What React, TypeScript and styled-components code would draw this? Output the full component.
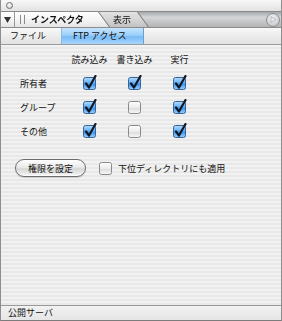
import React from "react";
import styled, { createGlobalStyle } from "styled-components";

const Global = createGlobalStyle`
  html, body {
    margin: 0;
    padding: 0;
    background: #ffffff;
  }
  body {
    font-family: "Noto Sans CJK JP", "Noto Sans", sans-serif;
    font-size: 9px;
    color: #111;
  }
`;

const Window = styled.div`
  width: 282px;
  height: 321px;
  box-sizing: border-box;
  display: flex;
  flex-direction: column;
  border-left: 1px solid #8e8e8e;
  border-right: 1px solid #8e8e8e;
  border-bottom: 1px solid #7c7c7c;
  overflow: hidden;
`;

const TitleBar = styled.div`
  height: 11px;
  flex: none;
  display: flex;
  align-items: center;
  padding-left: 5px;
  background: linear-gradient(#f8f8f8, #e2e2e2);
  border-bottom: 1px solid #8a8a8a;
`;

const CloseDot = styled.span`
  width: 5px;
  height: 5px;
  border-radius: 50%;
  border: 1px solid #6e6e6e;
  background: radial-gradient(circle at 40% 35%, #ffffff, #c8c8c8);
`;

const TabStrip = styled.div`
  height: 15px;
  flex: none;
  display: flex;
  align-items: stretch;
  background: linear-gradient(
    #a4a8ac 0%,
    #d4d6d8 35%,
    #c6c8ca 60%,
    #b2b4b6 100%
  );
  border-bottom: 1px solid #8c8c8c;
`;

const TabEdge = styled.div<{ $front?: boolean }>`
  display: flex;
  position: relative;
  z-index: ${(p) => (p.$front ? 2 : 1)};
  filter: drop-shadow(1px 0 0 #6f6f6f);
  margin-left: ${(p) => (p.$front ? 0 : -11)}px;
`;

const TabShape = styled.div<{ $w: number; $front?: boolean }>`
  width: ${(p) => p.$w}px;
  display: flex;
  align-items: center;
  clip-path: ${(p) =>
    p.$front
      ? `polygon(0 0, ${p.$w - 11}px 0, ${p.$w}px 100%, 0 100%)`
      : `polygon(0 0, ${p.$w - 11}px 0, ${p.$w}px 100%, 11px 100%)`};
  background: ${(p) =>
    p.$front
      ? "linear-gradient(#ffffff, #f2f2f2 60%, #e4e4e4)"
      : "linear-gradient(#e2e2e2, #d2d2d2 60%, #c2c2c2)"};
`;

const Disclosure = styled.div`
  width: 14px;
  align-self: stretch;
  display: flex;
  align-items: center;
  justify-content: center;
  border-right: 1px solid #9a9a9a;
  box-sizing: border-box;
`;

const Grip = styled.span`
  width: 3px;
  height: 9px;
  margin: 0 6px 0 5px;
  border-left: 1px solid #8a8a8a;
  border-right: 1px solid #8a8a8a;
`;

const TabLabel = styled.span<{ $bold?: boolean; $pad?: number }>`
  font-weight: ${(p) => (p.$bold ? 700 : 400)};
  padding-left: ${(p) => p.$pad ?? 0}px;
  font-size: 9px;
  line-height: 15px;
  white-space: nowrap;
`;

const RoundButton = styled.span`
  margin-left: auto;
  margin-right: 1px;
  align-self: center;
  width: 12px;
  height: 12px;
  border-radius: 50%;
  border: 1px solid #8c9094;
  background: radial-gradient(circle at 45% 35%, #f4f4f4, #b8bcc0);
  display: flex;
  align-items: center;
  justify-content: center;
`;

const SubTabs = styled.div`
  height: 16px;
  flex: none;
  display: flex;
  background: linear-gradient(#f8f8f8, #ececec 50%, #e2e2e2);
  border-bottom: 1px solid #9c9c9c;
`;

const SubTab = styled.div<{ $active?: boolean; $w: number }>`
  width: ${(p) => p.$w}px;
  box-sizing: border-box;
  padding-left: ${(p) => (p.$active ? 11 : 9)}px;
  line-height: 16px;
  font-size: 9px;
  white-space: nowrap;
  background: ${(p) =>
    p.$active
      ? "linear-gradient(#c6e4fd, #9ccffa 45%, #78bbf6 55%, #a6d6fc)"
      : "transparent"};
  border-right: ${(p) => (p.$active ? "1px solid #6a9fd0" : "none")};
  border-left: ${(p) => (p.$active ? "1px solid #8ab8e0" : "none")};
`;

const Content = styled.div`
  flex: 1;
  display: flex;
  flex-direction: column;
  padding: 2px 0 0 19px;
  background: repeating-linear-gradient(
    #f2f2f2 0px,
    #f2f2f2 2px,
    #e8e8e8 2px,
    #e8e8e8 4px
  );
`;

const PermGrid = styled.div`
  display: grid;
  grid-template-columns: 47px repeat(3, 45px);
  grid-auto-rows: 24px;
  align-items: center;
`;

const ColHead = styled.span`
  text-align: center;
  white-space: nowrap;
  font-size: 9px;
`;

const RowLabel = styled.span`
  font-size: 9px;
  white-space: nowrap;
`;

const Cell = styled.div`
  display: flex;
  justify-content: center;
  align-items: center;
`;

const ActionRow = styled.div`
  margin: 16px 0 0 -5px;
  display: flex;
  align-items: center;
`;

const PillButton = styled.button`
  width: 71px;
  height: 18px;
  padding: 0;
  border-radius: 9px;
  border: 1px solid #6c6c6c;
  background: linear-gradient(#ffffff, #eaeaea 45%, #d6d6d6 55%, #f6f6f6);
  box-shadow: inset 0 -1px 1px rgba(255, 255, 255, 0.8),
    0 1px 1px rgba(0, 0, 0, 0.15);
  font-family: inherit;
  font-size: 9px;
  color: #111;
`;

const CheckLabel = styled.label`
  margin-left: 12px;
  display: flex;
  align-items: center;
  gap: 4px;
  font-size: 9px;
  white-space: nowrap;
`;

const Footer = styled.div`
  height: 14px;
  flex: none;
  border-top: 1px solid #9a9a9a;
  background: linear-gradient(#f2f2f2, #e6e6e6);
  padding-left: 7px;
  line-height: 14px;
  font-size: 9px;
`;

const AquaCheck: React.FC<{ checked: boolean }> = ({ checked }) => (
  <svg width="16" height="16" viewBox="0 0 16 16">
    <defs>
      <linearGradient id="aquaOn" x1="0" y1="0" x2="0" y2="1">
        <stop offset="0" stopColor="#b8dcfc" />
        <stop offset="0.45" stopColor="#64aef4" />
        <stop offset="0.55" stopColor="#3e92ea" />
        <stop offset="1" stopColor="#9ad2fd" />
      </linearGradient>
      <linearGradient id="aquaOff" x1="0" y1="0" x2="0" y2="1">
        <stop offset="0" stopColor="#ffffff" />
        <stop offset="0.5" stopColor="#ececec" />
        <stop offset="0.55" stopColor="#dedede" />
        <stop offset="1" stopColor="#f8f8f8" />
      </linearGradient>
    </defs>
    <rect
      x="1.5"
      y="2.5"
      width="12"
      height="12"
      rx="2"
      fill={checked ? "url(#aquaOn)" : "url(#aquaOff)"}
      stroke={checked ? "#34649a" : "#8a8a8a"}
    />
    {checked && (
      <path
        d="M4 8.5 L7 12.5 L13.5 1"
        fill="none"
        stroke="#101828"
        strokeWidth="2.2"
        strokeLinecap="round"
        strokeLinejoin="round"
      />
    )}
  </svg>
);

const rows: { name: string; perms: boolean[] }[] = [
  { name: "所有者", perms: [true, true, true] },
  { name: "グループ", perms: [true, false, true] },
  { name: "その他", perms: [true, false, true] },
];

const App: React.FC = () => (
  <>
    <Global />
    <Window>
      <TitleBar>
        <CloseDot />
      </TitleBar>
      <TabStrip>
        <TabEdge $front>
          <TabShape $w={108} $front>
            <Disclosure>
              <svg width="7" height="6" viewBox="0 0 7 6">
                <path d="M0 0 H7 L3.5 6 Z" fill="#333" />
              </svg>
            </Disclosure>
            <Grip />
            <TabLabel $bold>インスペクタ</TabLabel>
          </TabShape>
        </TabEdge>
        <TabEdge>
          <TabShape $w={50}>
            <TabLabel $pad={15}>表示</TabLabel>
          </TabShape>
        </TabEdge>
        <RoundButton>
          <svg width="6" height="7" viewBox="0 0 6 7">
            <path d="M1 0.5 L5.5 3.5 L1 6.5 Z" fill="#e8eaec" stroke="#a0a4a8" strokeWidth="0.6" />
          </svg>
        </RoundButton>
      </TabStrip>
      <SubTabs>
        <SubTab $w={60}>ファイル</SubTab>
        <SubTab $w={83} $active>
          FTP アクセス
        </SubTab>
      </SubTabs>
      <Content>
        <PermGrid>
          <span />
          <ColHead>読み込み</ColHead>
          <ColHead>書き込み</ColHead>
          <ColHead>実行</ColHead>
          {rows.map((r) => (
            <React.Fragment key={r.name}>
              <RowLabel>{r.name}</RowLabel>
              {r.perms.map((on, i) => (
                <Cell key={i}>
                  <AquaCheck checked={on} />
                </Cell>
              ))}
            </React.Fragment>
          ))}
        </PermGrid>
        <ActionRow>
          <PillButton>権限を設定</PillButton>
          <CheckLabel>
            <AquaCheck checked={false} />
            下位ディレクトリにも適用
          </CheckLabel>
        </ActionRow>
      </Content>
      <Footer>公開サーバ</Footer>
    </Window>
  </>
);

export default App;
